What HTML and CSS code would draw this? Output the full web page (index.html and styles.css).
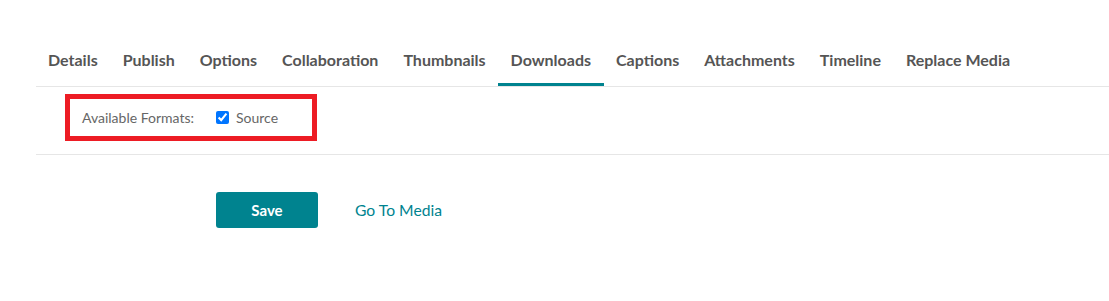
FILE: index.html
```html
<!DOCTYPE html>
<html lang="en">
<head>
  <meta charset="UTF-8">
  <meta name="viewport" content="width=device-width, initial-scale=1.0">
  <title>Edit Media</title>
  <link rel="stylesheet" href="styles.css">
</head>
<body>
  <div class="page">
    <ul class="tabs">
      <li><a href="#">Details</a></li>
      <li><a href="#">Publish</a></li>
      <li><a href="#">Options</a></li>
      <li><a href="#">Collaboration</a></li>
      <li><a href="#">Thumbnails</a></li>
      <li><a href="#" class="active">Downloads</a></li>
      <li><a href="#">Captions</a></li>
      <li><a href="#">Attachments</a></li>
      <li><a href="#">Timeline</a></li>
      <li><a href="#">Replace Media</a></li>
    </ul>

    <form action="#" class="form">
      <div class="formats">
        <span class="label">Available Formats:</span>
        <label class="check"><input type="checkbox" checked> Source</label>
      </div>
      <div class="sep"></div>
      <div class="actions">
        <button type="button" class="save">Save</button>
        <a href="#" class="goto">Go To Media</a>
      </div>
    </form>
  </div>
</body>
</html>
```

FILE: styles.css
```css
*{
  padding: 0;
  margin: 0;
  box-sizing: border-box;
}
body{
  font-family: Lato, "Open Sans", sans-serif;
  background-color: #fff;
  color: #666;
}
.page{
  padding-left: 36px;
  padding-top: 40px;
}
.tabs{
  display: flex;
  list-style: none;
  border-bottom: 1px solid #e6e6e6;
}
.tabs a{
  display: block;
  padding: 9px 12.5px 12px;
  line-height: 22px;
  font-size: 16px;
  font-weight: 700;
  color: #555;
  text-decoration: none;
  border-bottom: 3px solid transparent;
}
.tabs li:first-child a{
  padding-left: 12px;
}
.tabs a.active{
  border-bottom-color: #00838f;
}
.formats{
  display: inline-flex;
  align-items: center;
  margin: 7px 0 0 29px;
  width: 252px;
  height: 47px;
  padding-left: 12px;
  border: 5px solid #ed1c24;
  font-size: 14px;
}
.formats .label{
  width: 134px;
}
.check{
  display: flex;
  align-items: center;
  gap: 7px;
  color: #666;
}
.check input{
  margin: 0;
  width: 13px;
  height: 13px;
}
.sep{
  margin-top: 13px;
  border-top: 1px solid #e6e6e6;
}
.actions{
  display: flex;
  align-items: center;
  margin: 37px 0 0 180px;
}
.save{
  width: 102px;
  height: 36px;
  border: none;
  border-radius: 3px;
  background-color: #00838f;
  color: #fff;
  font-family: inherit;
  font-size: 15px;
  font-weight: 700;
}
.goto{
  margin-left: 37px;
  color: #00838f;
  font-size: 15.7px;
  text-decoration: none;
}
```
